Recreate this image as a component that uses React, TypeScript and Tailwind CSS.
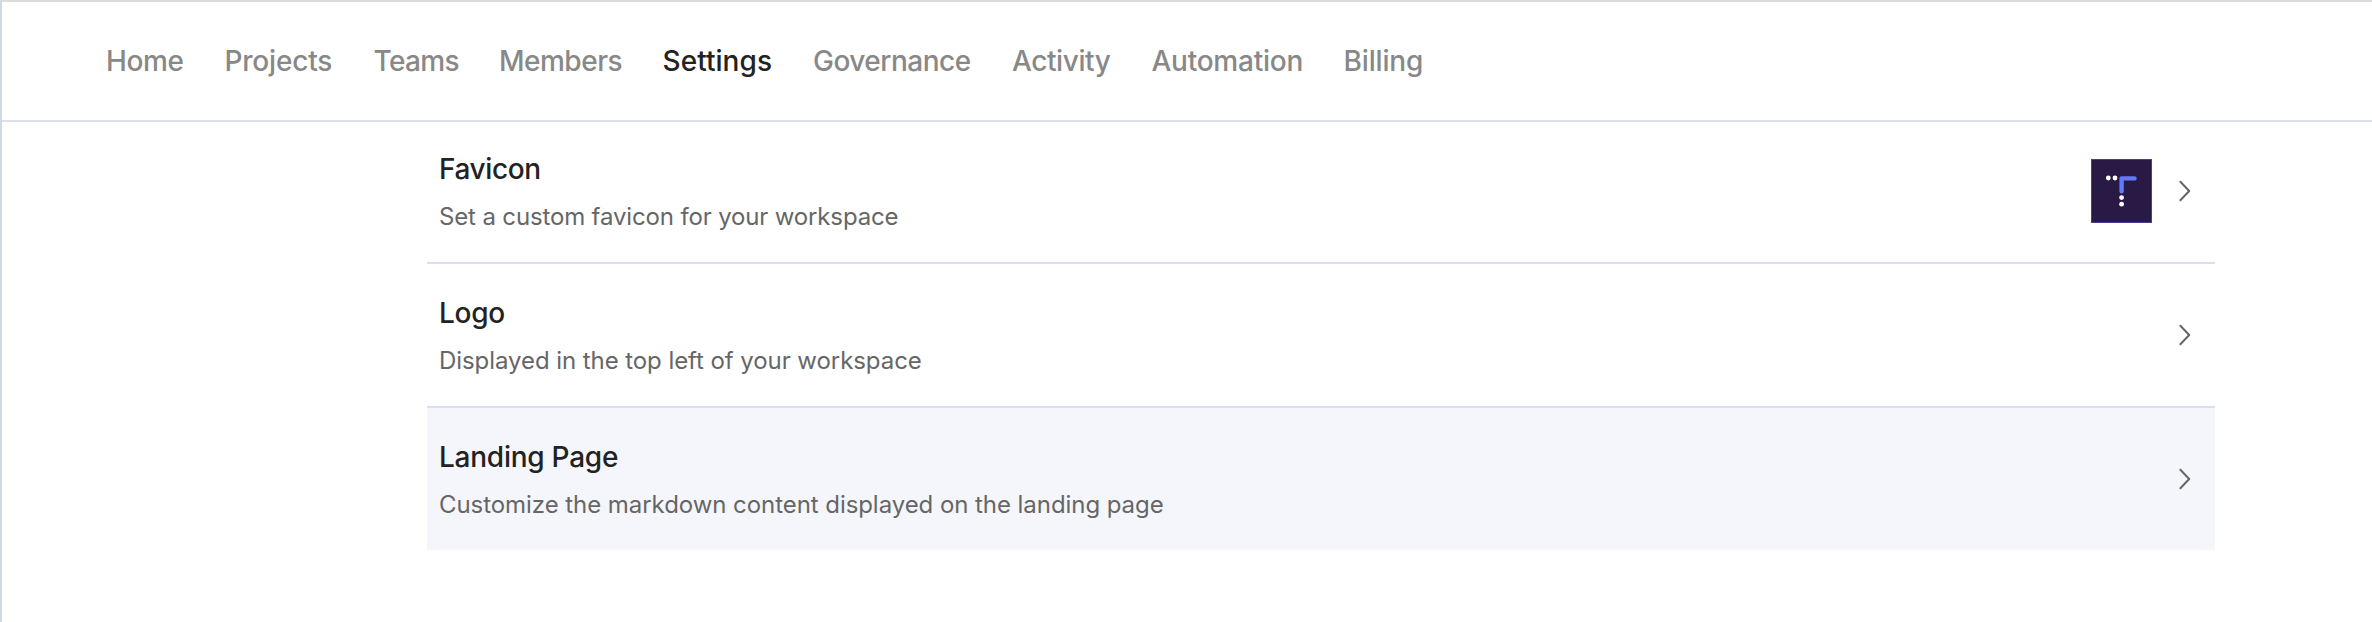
const navItems = [
  { label: "Home", style: "w-[118.5px] tracking-[-0.4px]" },
  { label: "Projects", style: "w-[149px] tracking-[-0.2px]" },
  { label: "Teams", style: "w-[125.5px] tracking-[-0.65px]" },
  { label: "Members", style: "w-[163.5px] tracking-[-0.5px]" },
  { label: "Settings", style: "w-[150.5px] tracking-[0.05px] text-[#222]" },
  { label: "Governance", style: "w-[199px] tracking-[-0.5px]" },
  { label: "Activity", style: "w-[139.5px] tracking-[-0.4px]" },
  { label: "Automation", style: "w-[192px] tracking-[-0.25px]" },
  { label: "Billing", style: "tracking-[-0.15px]" },
];

const rows = [
  {
    title: "Favicon",
    text: "Set a custom favicon for your workspace",
    favicon: true,
    rowStyle: "h-[142px] border-b-2 pb-[2px]",
    titleStyle: "tracking-[-0.4px]",
    textStyle: "tracking-[-0.15px]",
  },
  {
    title: "Logo",
    text: "Displayed in the top left of your workspace",
    rowStyle: "h-36 border-b-2",
    titleStyle: "tracking-[-0.3px]",
    textStyle: "tracking-[-0.07px]",
  },
  {
    title: "Landing Page",
    text: "Customize the markdown content displayed on the landing page",
    rowStyle: "h-[142px] bg-[#f5f6fb]",
    titleStyle: "tracking-[-0.25px]",
    textStyle: "tracking-[-0.06px]",
  },
];

function FaviconPreview() {
  return (
    <svg className="h-16 w-[61px]" viewBox="0 0 61 64">
      <rect x="0.5" y="0.5" width="60" height="63" fill="#281a45" stroke="#40429a" />
      <path d="M30.6 32.2V19.4H43.5" fill="none" stroke="#6478fb" strokeWidth="4.4" strokeLinecap="round" strokeLinejoin="round" />
      <g fill="#fff">
        <circle cx="17.3" cy="19" r="2.4" />
        <circle cx="24" cy="19" r="2.4" />
        <circle cx="30.6" cy="38.6" r="2.4" />
        <circle cx="30.6" cy="45.2" r="2.4" />
      </g>
    </svg>
  );
}

function Chevron() {
  return (
    <svg className="h-6 w-3" viewBox="0 0 12 24" fill="none" stroke="#666" strokeWidth="2" strokeLinecap="round" strokeLinejoin="round">
      <path d="M1.4 2.8L10.2 12L1.4 21.2" />
    </svg>
  );
}

export default function App() {
  return (
    <div className="h-[622px] w-full border-t-2 border-l-2 border-t-[#dcdcdc] border-l-[#cfd9e4] bg-white font-['Inter',sans-serif]">
      <nav className="flex h-[120px] items-center border-b-2 border-[#d9dfec] pl-[104px] text-[28px] font-medium text-[#888]">
        {navItems.map((item) => (
          <a key={item.label} className={item.style}>
            {item.label}
          </a>
        ))}
      </nav>
      <main className="ml-[425px] w-[1788px]">
        {rows.map((row) => (
          <section
            key={row.title}
            className={`flex items-center justify-between border-[#d9dfec] pr-[24px] pl-3 ${row.rowStyle}`}
          >
            <div className="pt-[3px]">
              <h2 className={`text-[28px] leading-[48px] font-medium text-[#222] ${row.titleStyle}`}>{row.title}</h2>
              <p className={`text-[24px] leading-[47px] text-[#666] ${row.textStyle}`}>{row.text}</p>
            </div>
            <div className="flex items-center gap-[27px]">
              {row.favicon && <FaviconPreview />}
              <Chevron />
            </div>
          </section>
        ))}
      </main>
    </div>
  );
}
